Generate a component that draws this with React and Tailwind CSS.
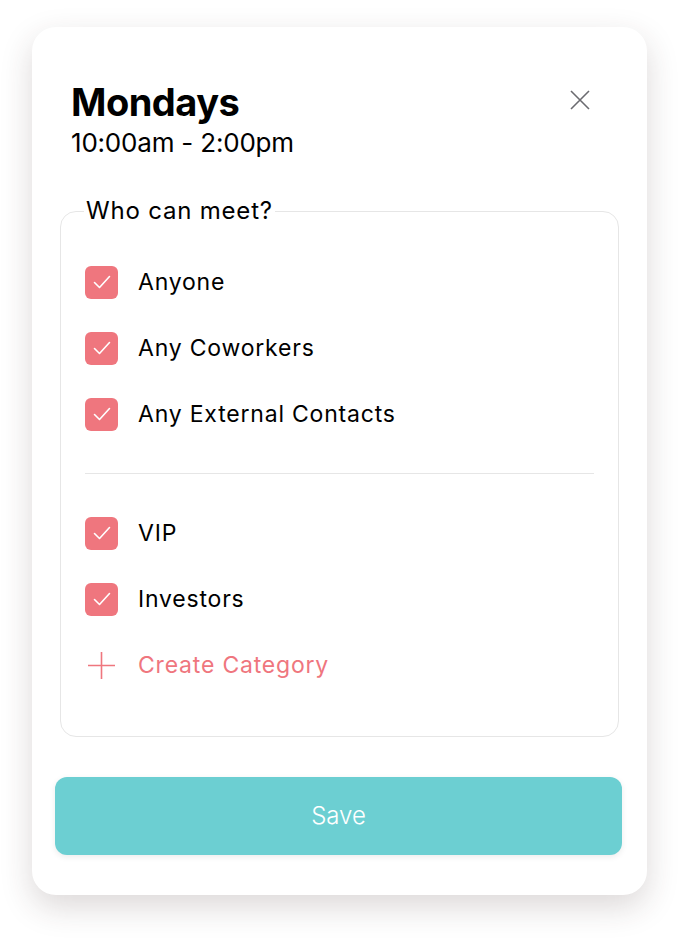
import React, { useState } from 'react';

const items = ['Anyone', 'Any Coworkers', 'Any External Contacts'];
const categories = ['VIP', 'Investors'];

function CheckRow({ label, checked, onToggle }) {
    return (
        <label className="flex items-center h-[66px] cursor-pointer">
            <span
                onClick={onToggle}
                className={`flex items-center justify-center w-[33px] h-[33px] rounded-[6px] ${checked ? 'bg-[#ef767e]' : 'border-2 border-[#ef767e] bg-white'}`}
            >
                {checked && (
                    <svg width="22" height="22" viewBox="0 0 22 22" fill="none">
                        <path d="M3.5 11.5 L8.5 16.5 L18.5 5.5" stroke="white" strokeWidth="1.6" strokeLinecap="round" strokeLinejoin="round" />
                    </svg>
                )}
            </span>
            <span className="ml-[20px] text-[23px] text-black tracking-[0.8px]">{label}</span>
        </label>
    );
}

export default function App() {
    const [checked, setChecked] = useState({
        Anyone: true,
        'Any Coworkers': true,
        'Any External Contacts': true,
        VIP: true,
        Investors: true,
    });

    const toggle = (key) => setChecked((c) => ({ ...c, [key]: !c[key] }));

    return (
        <div className="min-h-screen bg-white pt-[27px] pl-[32px]" style={{ fontFamily: 'Inter, "Noto Sans", sans-serif' }}>
            <div className="w-[615px] h-[868px] bg-white rounded-[24px] shadow-[0_12px_32px_rgba(60,40,40,0.18)] px-[28px] pt-[50px]">
                {/* header */}
                <div className="flex justify-between items-start pl-[11px]">
                    <div>
                        <h2 className="text-[38px] leading-[50px] font-bold text-black tracking-[-0.5px]">Mondays</h2>
                        <p className="text-[26px] leading-[32px] text-black tracking-[-0.2px]">10:00am - 2:00pm</p>
                    </div>
                    <button className="mt-[13px] mr-[29px] text-[#6b6b70]">
                        <svg width="20" height="20" viewBox="0 0 20 20" fill="none">
                            <path d="M1 1 L19 19 M19 1 L1 19" stroke="currentColor" strokeWidth="1.6" />
                        </svg>
                    </button>
                </div>

                {/* who can meet */}
                <fieldset className="mt-[37px] border border-[#e6e6e6] rounded-[16px] px-[24px] pb-[38px] pt-[23px]">
                    <legend className="px-[2px] -ml-[1px] text-[24px] leading-[30px] text-black tracking-[0.8px]">Who can meet?</legend>
                    {items.map((it) => (
                        <CheckRow key={it} label={it} checked={checked[it]} onToggle={() => toggle(it)} />
                    ))}
                    <div className="my-[26px] border-t border-[#e6e6e6]" />
                    {categories.map((it) => (
                        <CheckRow key={it} label={it} checked={checked[it]} onToggle={() => toggle(it)} />
                    ))}
                    <button className="flex items-center h-[66px] text-[#ef767e]">
                        <svg width="33" height="33" viewBox="0 0 33 33" fill="none">
                            <path d="M16.5 3 V30 M3 16.5 H30" stroke="currentColor" strokeWidth="1.6" />
                        </svg>
                        <span className="ml-[20px] text-[23px] tracking-[0.8px]">Create Category</span>
                    </button>
                </fieldset>

                {/* save */}
                <button className="mt-[40px] -ml-[5px] w-[567px] h-[78px] rounded-[12px] bg-[#6ccfd2] text-white text-[24px] font-light shadow-[0_2px_6px_rgba(0,0,0,0.08)]">
                    Save
                </button>
            </div>
        </div>
    );
}
